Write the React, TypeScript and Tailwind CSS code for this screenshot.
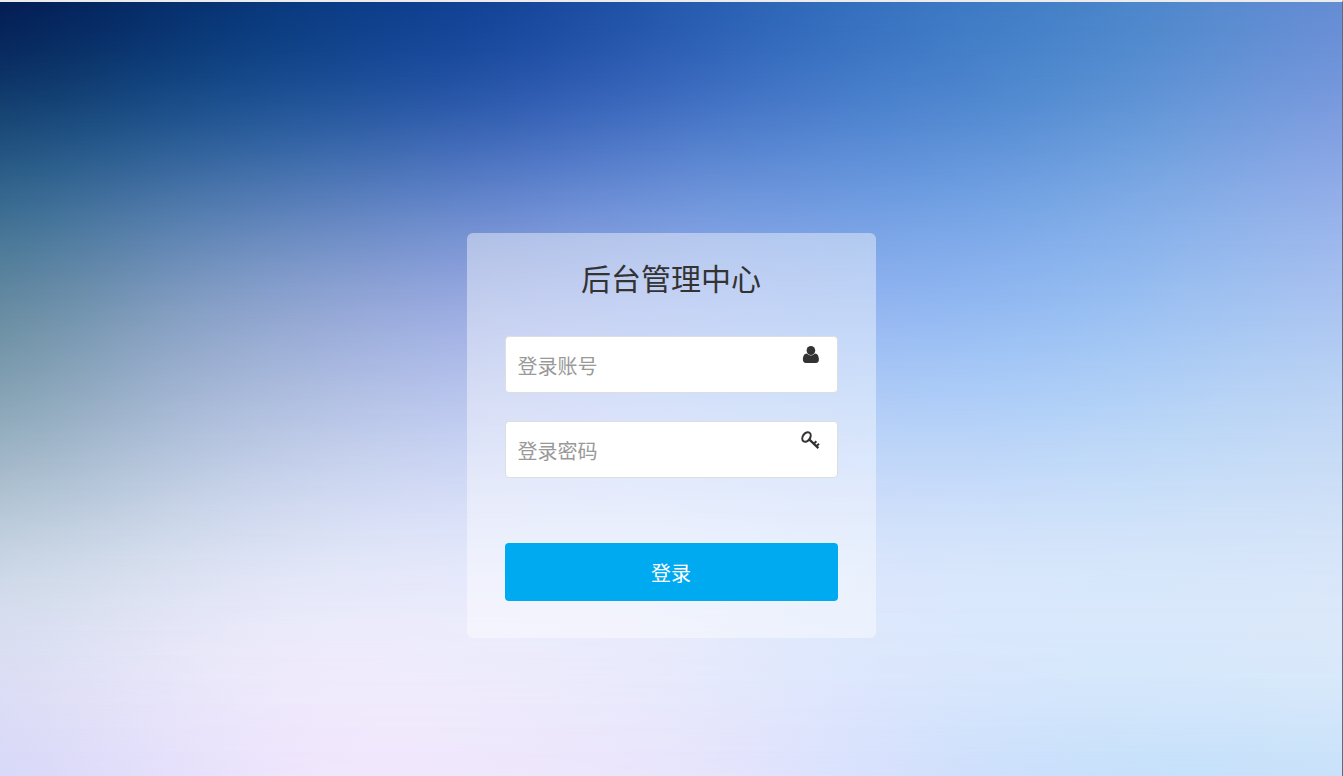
import React from 'react'

// Colour mesh of the page backdrop: one line per row, evenly spaced both ways.
const MESH = [
  ['#02144c', '#042c68', '#083a84', '#0f3e94', '#2056aa', '#306cbc', '#3e7cc4', '#4c86ca', '#668cd4'],
  ['#0d3866', '#114a86', '#1b5098', '#2653ac', '#3b68c0', '#467cca', '#4c87ce', '#6096d6', '#7c98de'],
  ['#30688e', '#4a76ac', '#5880bc', '#6285d0', '#7096da', '#6c9ae0', '#72a2e4', '#82aee6', '#98aeea'],
  ['#5c8496', '#809cc0', '#92a4d4', '#98a8e4', '#9db1ed', '#8eb0f0', '#8eb6f2', '#98c0f2', '#aac2f0'],
  ['#7c9caa', '#a2b4d4', '#b0bee2', '#bac6f2', '#b4caf7', '#accaf6', '#a8ccf8', '#b2d2f6', '#bed4f4'],
  ['#a8bccc', '#c0cee4', '#d0daf2', '#d4dcf8', '#d0dcfa', '#c9dafa', '#c8dcfa', '#c8dff8', '#cddff6'],
  ['#d0dcea', '#e0e6f4', '#e8ebfb', '#e9ecfc', '#e8eefd', '#dee8fc', '#dceafc', '#dae9fb', '#dce7fa'],
  ['#dcdef4', '#ebe8fa', '#f4edfd', '#eeecfc', '#e9eafc', '#dde7fd', '#d8e7fc', '#d8e9fb', '#dceaf9'],
  ['#d4d6f9', '#e4defb', '#f1e6fd', '#eee6fc', '#eae4fc', '#dae0fd', '#c8defc', '#c0dffb', '#c6e0fa'],
]

type RGB = number[]

const parse = (hex: string): RGB => [1, 3, 5].map((i) => parseInt(hex.slice(i, i + 2), 16))

// Cubic B-spline through a list, four samples per interval, so the mesh shows no creases
function smooth<T>(list: T[], mix: (items: T[], weights: number[]) => T): T[] {
  const at = (i: number) => list[Math.max(0, Math.min(list.length - 1, i))]
  const out: T[] = []
  for (let s = 0; s <= (list.length - 1) * 4; s++) {
    const i = Math.floor(s / 4)
    const t = (s % 4) / 4
    const weights = [
      (1 - t) ** 3 / 6,
      (3 * t ** 3 - 6 * t ** 2 + 4) / 6,
      (-3 * t ** 3 + 3 * t ** 2 + 3 * t + 1) / 6,
      t ** 3 / 6,
    ]
    out.push(mix([at(i - 1), at(i), at(i + 1), at(i + 2)], weights))
  }
  return out
}

const mixColors = (colors: RGB[], w: number[]): RGB =>
  [0, 1, 2].map((c) => colors.reduce((sum, color, k) => sum + color[c] * w[k], 0))

const mixRows = (rows: RGB[][], w: number[]): RGB[] =>
  rows[0].map((_, j) => mixColors(rows.map((row) => row[j]), w))

const ROWS = smooth(
  MESH.map((row) => smooth(row.map(parse), mixColors)),
  mixRows
)

const STEPS = ROWS.length - 1

function Backdrop() {
  return (
    <svg
      className="absolute inset-0 w-full h-full"
      viewBox="0 0 800 800"
      preserveAspectRatio="none"
      aria-hidden="true"
    >
      <defs>
        {ROWS.map((row, i) => (
          <React.Fragment key={i}>
            <linearGradient id={`row-${i}`}>
              {row.map((color, j) => (
                <stop
                  key={j}
                  offset={j / (row.length - 1)}
                  stopColor={`rgb(${color.map(Math.round).join(',')})`}
                />
              ))}
            </linearGradient>
            {i > 0 && (
              <>
                <linearGradient id={`fade-${i}`} x1="0" y1="0" x2="0" y2="1">
                  <stop offset={(i - 1) / STEPS} stopColor="#fff" stopOpacity="0" />
                  <stop offset={i / STEPS} stopColor="#fff" stopOpacity="1" />
                </linearGradient>
                <mask id={`mask-${i}`} maskUnits="userSpaceOnUse" x="0" y="0" width="800" height="800">
                  <rect width="800" height="800" fill={`url(#fade-${i})`} />
                </mask>
              </>
            )}
          </React.Fragment>
        ))}
      </defs>
      {/* Each row fades in over the one above it */}
      {ROWS.map((_, i) => (
        <rect
          key={i}
          width="800"
          height="800"
          fill={`url(#row-${i})`}
          mask={i > 0 ? `url(#mask-${i})` : undefined}
        />
      ))}
    </svg>
  )
}

const iconClass = 'absolute top-2 right-4 size-[22px] text-[#333] pointer-events-none'

function UserIcon() {
  return (
    <svg className={iconClass} viewBox="0 0 22 22" fill="currentColor" aria-hidden="true">
      <ellipse cx="10.9" cy="6.5" rx="4.3" ry="4.5" />
      <path d="M6.9 9.6C8 10.9 9.4 11.5 10.9 11.5S13.8 10.9 14.9 9.6C17.6 9.7 18.9 12.4 18.9 15.6C18.9 17.8 17.8 19 15.9 19H5.9C4 19 2.9 17.8 2.9 15.6C2.9 12.4 4.2 9.7 6.9 9.6Z" />
    </svg>
  )
}

function KeyIcon() {
  return (
    <svg className={iconClass} viewBox="0 0 22 22" fill="none" stroke="currentColor" aria-hidden="true">
      <ellipse cx="6.5" cy="8" rx="3.6" ry="5.2" strokeWidth="2.1" transform="rotate(35 6.5 8)" />
      <path d="M9.2 10.4L18.4 19.2" strokeWidth="2.3" />
      <path d="M13.8 14.8L16.4 12.3M16.4 17.2L19 14.7" strokeWidth="1.9" />
    </svg>
  )
}

type FieldProps = {
  name: string
  type: string
  label: string
  children: React.ReactNode
}

function Field({ name, type, label, children }: FieldProps) {
  return (
    <div className="relative">
      <input
        id={name}
        name={name}
        type={type}
        placeholder={label}
        aria-label={label}
        className="block w-full h-[57px] px-3 pt-0.5 rounded border border-[#dcdee0] bg-white text-xl text-[#333] placeholder:text-[#999] outline-none focus:border-[#00aaf1]"
      />
      {children}
    </div>
  )
}

export default function App() {
  return (
    <div className="relative min-h-screen border-t-2 border-r border-t-[#ececec] border-r-[#5f6b80] font-['Noto_Sans_CJK_SC',sans-serif]">
      <Backdrop />
      <main className="relative flex justify-center pt-[calc(30vh-2px)] pb-10">
        <form
          className="w-[409px] max-w-full px-[38px] pt-6 pb-[37px] rounded-md bg-white/42"
          onSubmit={(e) => e.preventDefault()}
        >
          <h1 className="text-center text-[30px] leading-10 text-[#333]">后台管理中心</h1>
          <div className="mt-[39px] space-y-7">
            <Field name="username" type="text" label="登录账号">
              <UserIcon />
            </Field>
            <Field name="password" type="password" label="登录密码">
              <KeyIcon />
            </Field>
          </div>
          <button
            type="submit"
            className="block w-full h-[58px] mt-[65px] pt-0.5 rounded bg-[#00aaf1] text-xl text-white cursor-pointer"
          >
            登录
          </button>
        </form>
      </main>
    </div>
  )
}
